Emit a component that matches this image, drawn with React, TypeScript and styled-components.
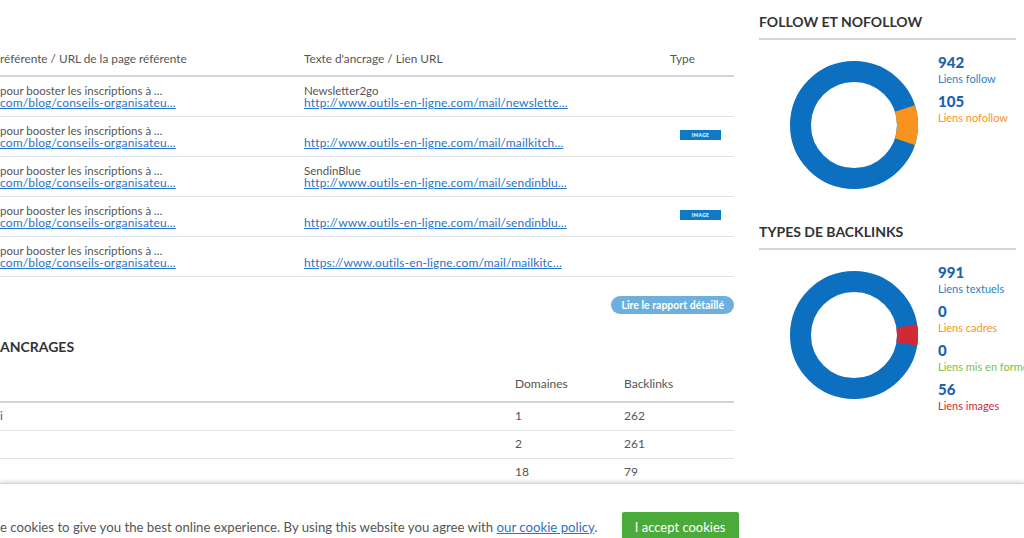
import React from 'react';
import styled, { createGlobalStyle } from 'styled-components';

const GlobalStyle = createGlobalStyle`
  html, body {
    margin: 0;
    padding: 0;
    background: #fff;
    overflow: hidden;
  }
  body {
    font-family: Lato, 'Open Sans', 'Liberation Sans', sans-serif;
    color: #555;
  }
`;

const Page = styled.div`
  width: 1024px;
  height: 538px;
  overflow: hidden;
  display: flex;
  flex-direction: column;
`;

const Main = styled.div`
  height: 483px;
  flex: none;
  display: flex;
  gap: 25px;
  overflow: hidden;
`;

const LeftCol = styled.div`
  width: 734px;
  flex: none;
  padding-top: 44px;
  display: flex;
  flex-direction: column;
`;

const RightCol = styled.div`
  width: 257px;
  flex: none;
  display: flex;
  flex-direction: column;
`;

const Grid = styled.div<{ $cols: string }>`
  display: grid;
  grid-template-columns: ${(p) => p.$cols};
`;

const HeadCell = styled.div`
  font-size: 11.8px;
  line-height: 14px;
  color: #555;
  padding: 8px 0 9px;
  border-bottom: 2px solid #d4d4d4;
  white-space: nowrap;
`;

const Cell = styled.div`
  font-size: 11.5px;
  line-height: 12px;
  color: #555;
  padding: 8px 0 7px;
  border-bottom: 1px solid #e3e3e3;
  white-space: nowrap;
  min-height: 24px;
`;

const Line = styled.div`
  height: 12px;
`;

const Link = styled.a`
  color: #2a73c6;
  text-decoration: underline;
  cursor: pointer;
`;

const UrlLink = styled(Link)`
  font-size: 12px;
  letter-spacing: 0.15px;
`;

const TypeBadge = styled.span`
  display: inline-block;
  margin: 5px 0 0 10px;
  width: 41px;
  height: 10px;
  background: #0e7ac4;
  color: #fff;
  font-size: 5px;
  font-weight: 700;
  line-height: 10px;
  text-align: center;
  letter-spacing: 0.3px;
`;

const ReportRow = styled.div`
  display: flex;
  justify-content: flex-end;
  margin-top: 19px;
`;

const ReportButton = styled.button`
  border: none;
  background: #6eb0dd;
  color: #fff;
  font-family: inherit;
  font-size: 10.5px;
  font-weight: 700;
  height: 18px;
  padding: 0 10px;
  border-radius: 9px;
  cursor: pointer;
`;

const SectionTitle = styled.h2`
  margin: 23px 0 0;
  font-size: 14px;
  font-weight: 700;
  line-height: 20px;
  color: #333;
`;

const AnchorGrid = styled(Grid)`
  margin-top: 13px;
`;

const AnchorCell = styled.div<{ $head?: boolean }>`
  font-size: 12px;
  line-height: 14px;
  color: #555;
  padding: ${(p) => (p.$head ? '7px 0 10px' : '6px 0 7px')};
  border-bottom: ${(p) => (p.$head ? '2px solid #d4d4d4' : '1px solid #e3e3e3')};
  min-height: 14px;
`;

const Widget = styled.section<{ $top: number }>`
  padding-top: ${(p) => p.$top}px;
`;

const WidgetTitle = styled.h3`
  margin: 0;
  font-size: 14px;
  font-weight: 700;
  line-height: 18px;
  color: #333;
  padding-bottom: 7px;
  border-bottom: 2px solid #d6d6d6;
`;

const WidgetBody = styled.div`
  display: flex;
  align-items: flex-start;
  padding-left: 31px;
  margin-top: 13px;
`;

const DonutWrap = styled.div`
  width: 128px;
  height: 128px;
  margin-top: 8px;
  flex: none;
`;

const Legend = styled.div`
  margin-left: 20px;
  display: flex;
  flex-direction: column;
  gap: 5px;
  white-space: nowrap;
`;

const LegendItem = styled.div`
  display: flex;
  flex-direction: column;
`;

const LegendValue = styled.span`
  font-size: 15px;
  font-weight: 900;
  line-height: 18px;
  color: #1d62ae;
`;

const LegendLabel = styled.span<{ $color: string }>`
  font-size: 11px;
  line-height: 16px;
  color: ${(p) => p.$color};
`;

const CookieBar = styled.div`
  flex: none;
  height: 86px;
  border-top: 1px solid #d9d9d9;
  box-shadow: 0 -2px 3px rgba(0, 0, 0, 0.12);
  display: flex;
  align-items: center;
  gap: 24px;
  background: #fff;
`;

const CookieText = styled.p`
  margin: 0;
  font-size: 13.2px;
  color: #555;
  white-space: nowrap;
`;

const CookieButton = styled.button`
  border: none;
  background: #4aab3b;
  color: #fff;
  font-family: inherit;
  font-size: 13px;
  height: 30px;
  width: 117px;
  padding: 0;
  border-radius: 2px;
  cursor: pointer;
`;

const BLUE = '#0c6fc0';

function Donut({ part, color }: { part: number; color: string }) {
  const r = 53.5;
  const c = 2 * Math.PI * r;
  const deg = part * 360;
  return (
    <svg width="128" height="128" viewBox="0 0 128 128">
      <circle cx="64" cy="64" r={r} fill="none" stroke={BLUE} strokeWidth="21" />
      <circle
        cx="64"
        cy="64"
        r={r}
        fill="none"
        stroke={color}
        strokeWidth="21"
        strokeDasharray={`${part * c} ${c}`}
        transform={`rotate(${-deg / 2} 64 64)`}
      />
    </svg>
  );
}

const backlinks = [
  { anchor: 'Newsletter2go', url: 'http://www.outils-en-ligne.com/mail/newslette...', image: false },
  { anchor: '', url: 'http://www.outils-en-ligne.com/mail/mailkitch...', image: true },
  { anchor: 'SendinBlue', url: 'http://www.outils-en-ligne.com/mail/sendinblu...', image: false },
  { anchor: '', url: 'http://www.outils-en-ligne.com/mail/sendinblu...', image: true },
  { anchor: '', url: 'https://www.outils-en-ligne.com/mail/mailkitc...', image: false },
];

const anchors = [
  { name: 'i', domains: '1', links: '262' },
  { name: '', domains: '2', links: '261' },
  { name: '', domains: '18', links: '79' },
];

export default function App() {
  return (
    <Page>
      <GlobalStyle />
      <Main>
        <LeftCol>
          <Grid $cols="304px 366px 64px">
            <HeadCell>référente / URL de la page référente</HeadCell>
            <HeadCell>Texte d'ancrage / Lien URL</HeadCell>
            <HeadCell>Type</HeadCell>
            {backlinks.map((b, i) => (
              <React.Fragment key={i}>
                <Cell>
                  <Line>pour booster les inscriptions à ...</Line>
                  <Line>
                    <UrlLink>com/blog/conseils-organisateu...</UrlLink>
                  </Line>
                </Cell>
                <Cell>
                  <Line>{b.anchor}</Line>
                  <Line>
                    <UrlLink>{b.url}</UrlLink>
                  </Line>
                </Cell>
                <Cell>{b.image && <TypeBadge>IMAGE</TypeBadge>}</Cell>
              </React.Fragment>
            ))}
          </Grid>
          <ReportRow>
            <ReportButton>Lire le rapport détaillé</ReportButton>
          </ReportRow>
          <SectionTitle>ANCRAGES</SectionTitle>
          <AnchorGrid $cols="515px 109px 110px">
            <AnchorCell $head />
            <AnchorCell $head>Domaines</AnchorCell>
            <AnchorCell $head>Backlinks</AnchorCell>
            {anchors.map((a, i) => (
              <React.Fragment key={i}>
                <AnchorCell>{a.name}</AnchorCell>
                <AnchorCell>{a.domains}</AnchorCell>
                <AnchorCell>{a.links}</AnchorCell>
              </React.Fragment>
            ))}
          </AnchorGrid>
        </LeftCol>
        <RightCol>
          <Widget $top={13}>
            <WidgetTitle>FOLLOW ET NOFOLLOW</WidgetTitle>
            <WidgetBody>
              <DonutWrap>
                <Donut part={105 / 1047} color="#f7931e" />
              </DonutWrap>
              <Legend>
                <LegendItem>
                  <LegendValue>942</LegendValue>
                  <LegendLabel $color="#2f7fc8">Liens follow</LegendLabel>
                </LegendItem>
                <LegendItem>
                  <LegendValue>105</LegendValue>
                  <LegendLabel $color="#f7931e">Liens nofollow</LegendLabel>
                </LegendItem>
              </Legend>
            </WidgetBody>
          </Widget>
          <Widget $top={34}>
            <WidgetTitle>TYPES DE BACKLINKS</WidgetTitle>
            <WidgetBody>
              <DonutWrap>
                <Donut part={56 / 1047} color="#d02a34" />
              </DonutWrap>
              <Legend>
                <LegendItem>
                  <LegendValue>991</LegendValue>
                  <LegendLabel $color="#2f7fc8">Liens textuels</LegendLabel>
                </LegendItem>
                <LegendItem>
                  <LegendValue>0</LegendValue>
                  <LegendLabel $color="#f7931e">Liens cadres</LegendLabel>
                </LegendItem>
                <LegendItem>
                  <LegendValue>0</LegendValue>
                  <LegendLabel $color="#7cc142">Liens mis en forme</LegendLabel>
                </LegendItem>
                <LegendItem>
                  <LegendValue>56</LegendValue>
                  <LegendLabel $color="#d02a34">Liens images</LegendLabel>
                </LegendItem>
              </Legend>
            </WidgetBody>
          </Widget>
        </RightCol>
      </Main>
      <CookieBar>
        <CookieText>
          e cookies to give you the best online experience. By using this website you agree with{' '}
          <Link>our cookie policy</Link>.
        </CookieText>
        <CookieButton>I accept cookies</CookieButton>
      </CookieBar>
    </Page>
  );
}
